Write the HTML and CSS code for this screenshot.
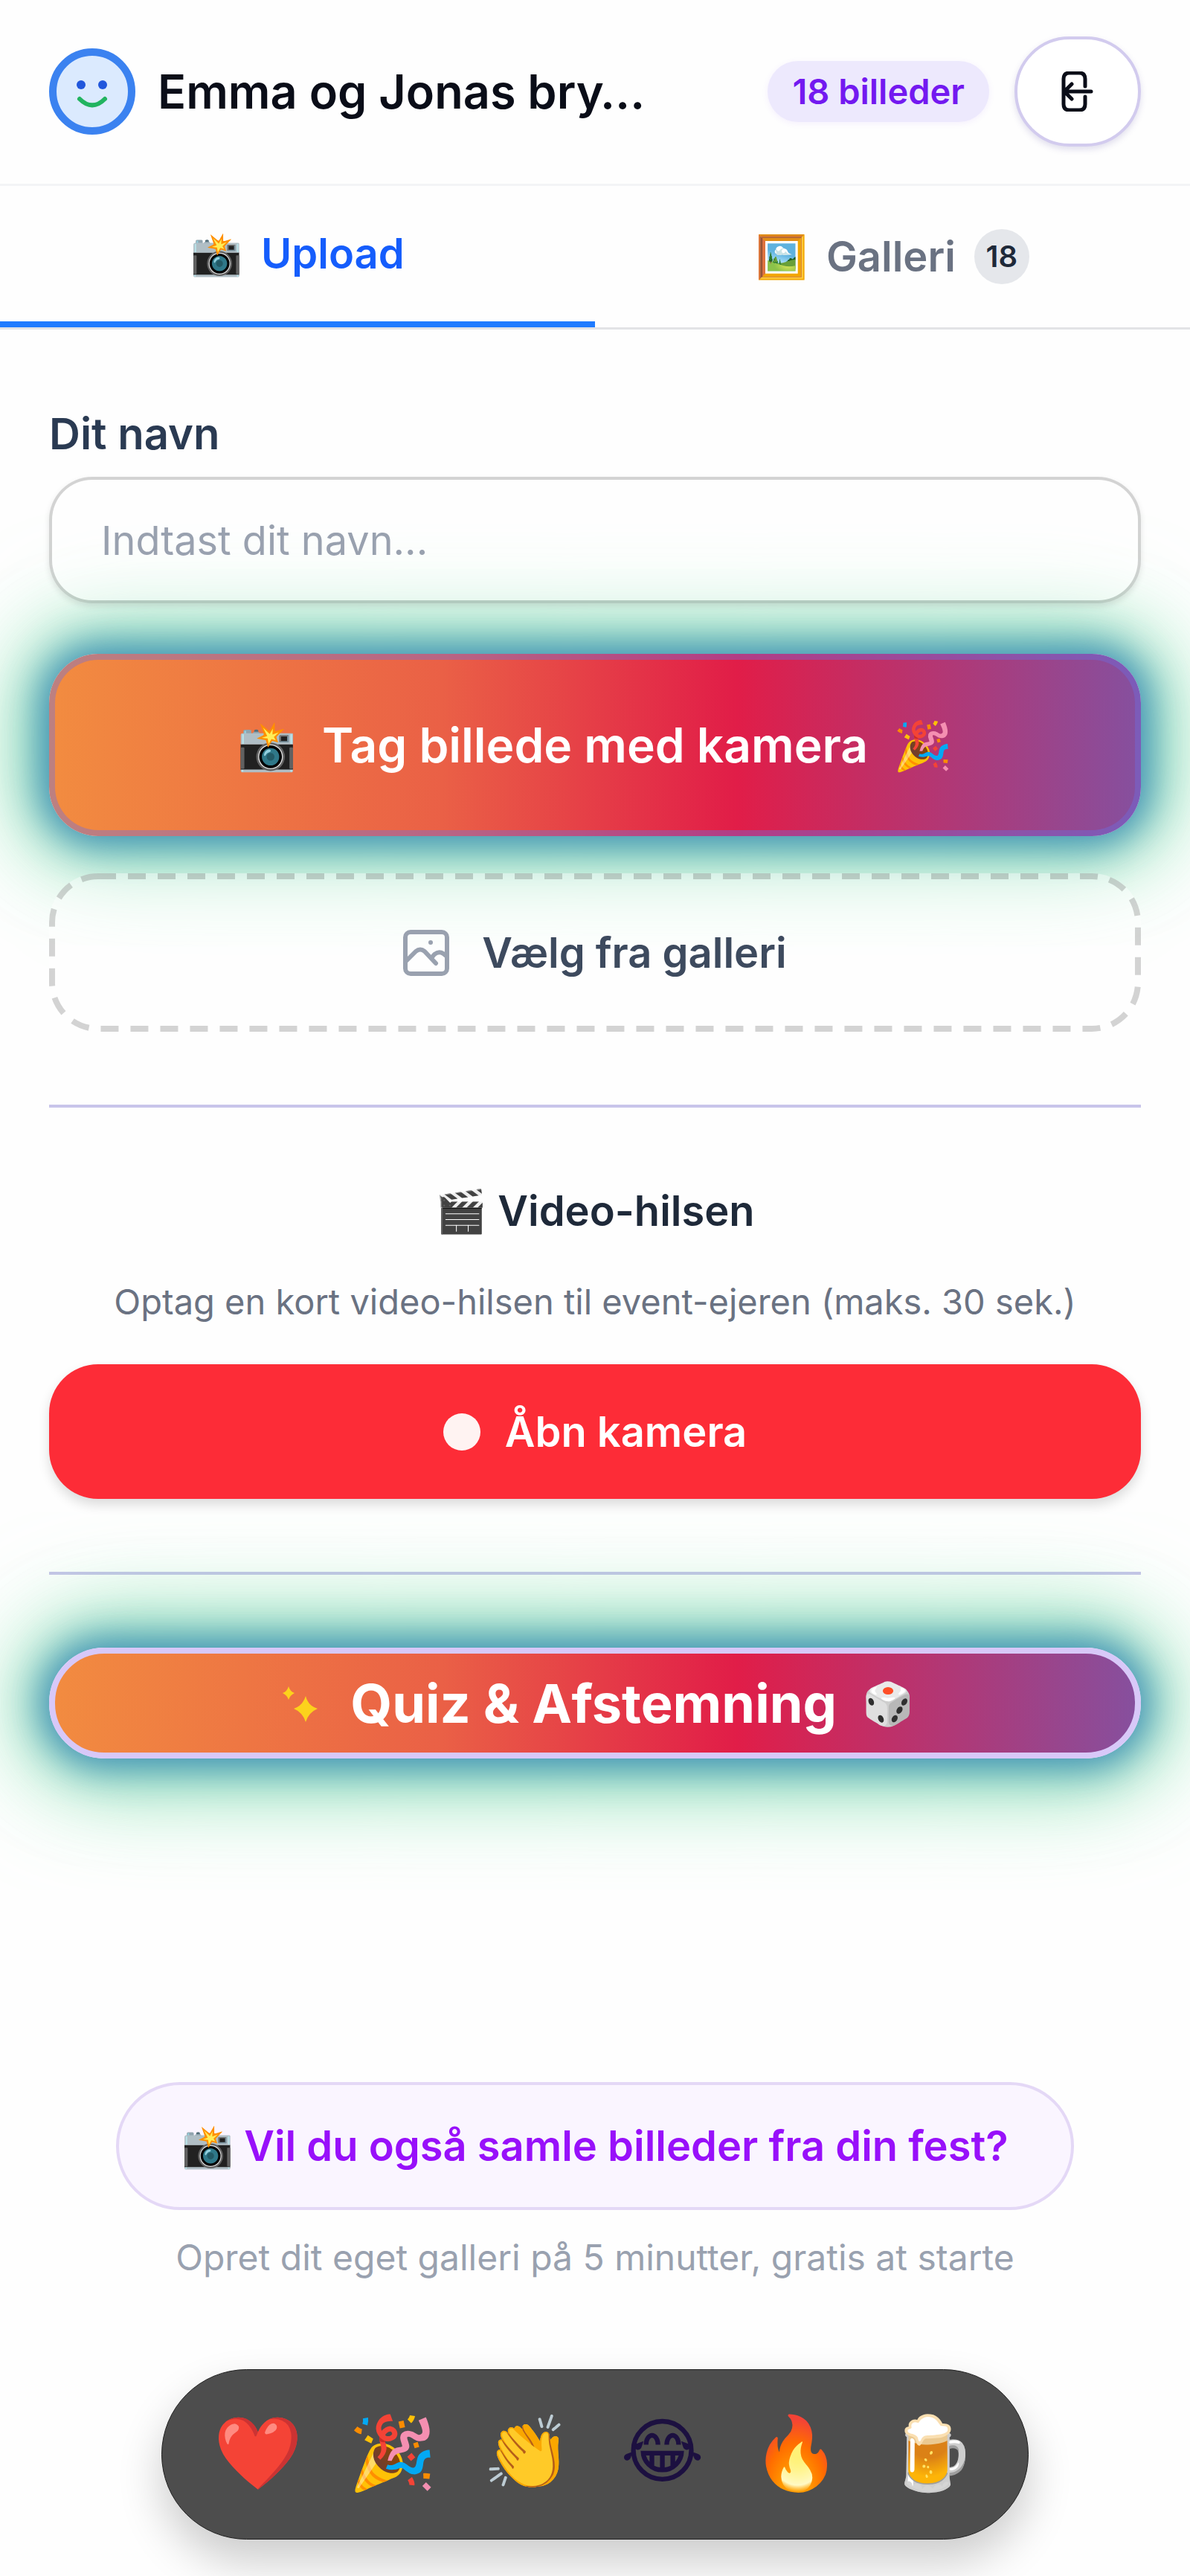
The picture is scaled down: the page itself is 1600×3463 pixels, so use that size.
FILE: index.html
```html
<!DOCTYPE html>
<html lang="da">
<head>
<meta charset="utf-8">
<meta name="viewport" content="width=device-width, initial-scale=1">
<title>Emma og Jonas bry…</title>
<link rel="stylesheet" href="styles.css">
</head>
<body>
<header class="header">
  <svg class="logo" viewBox="0 0 116 116" aria-hidden="true">
    <circle cx="58" cy="58" r="53" fill="#dbeafe" stroke="#3b82f0" stroke-width="10"/>
    <circle cx="43" cy="49" r="6" fill="#2157dc"/>
    <circle cx="72" cy="49" r="6" fill="#2157dc"/>
    <path d="M41 68q17 17 34 0" fill="none" stroke="#22b460" stroke-width="6" stroke-linecap="round"/>
  </svg>
  <h1 class="title">Emma og Jonas bry…</h1>
  <span class="count">18 billeder</span>
  <button class="leave" type="button" aria-label="Forlad">
    <svg class="leave-icon" viewBox="0 0 44 54" aria-hidden="true">
      <path d="M32 20V10q0-8-8-8H11q-8 0-8 8v34q0 8 8 8h13q8 0 8-8V34M40 27H5M14 17L4 27l10 10"/>
    </svg>
  </button>
</header>

<nav class="tabs">
  <button class="tab tab-active" type="button"><span>📸</span><span>Upload</span></button>
  <button class="tab" type="button"><span>🖼️</span><span>Galleri</span><span class="tab-count">18</span></button>
</nav>

<main class="main">
  <label class="label" for="name">Dit navn</label>
  <input class="name" id="name" type="text" placeholder="Indtast dit navn...">

  <button class="glow camera" type="button"><span class="emoji">📸</span><span>Tag billede med kamera</span><span class="emoji">🎉</span></button>

  <button class="gallery" type="button">
    <svg class="dashes" aria-hidden="true"><rect class="dash-rect" x="4" y="4" rx="62"/></svg>
    <svg class="gallery-icon" viewBox="0 0 62 62" aria-hidden="true">
      <rect x="3" y="3" width="56" height="56" rx="7"/>
      <path d="M3 43l14-14q6-5 12 0l15 16M38 38l4-5q6-5 12-1l5 4"/>
      <circle class="gallery-sun" cx="37" cy="17" r="3"/>
    </svg>
    <span>Vælg fra galleri</span>
  </button>

  <section class="section">
    <h2 class="section-title">🎬 Video-hilsen</h2>
    <p class="hint">Optag en kort video-hilsen til event-ejeren (maks. 30 sek.)</p>
    <button class="record" type="button"><span class="dot"></span><span>Åbn kamera</span></button>
  </section>

  <section class="section">
    <button class="glow quiz" type="button">
      <svg class="sparkle" viewBox="0 0 66 66" aria-hidden="true">
        <path d="M17 10q2 7 8 9q-6 3-8 9q-2-6-8-9q6-2 8-9zM40 23q3 13 16 17q-12 5-16 18q-4-13-16-18q12-4 16-17z"/>
      </svg>
      <span>Quiz &amp; Afstemning</span>
      <span class="emoji">🎲</span>
    </button>
  </section>
</main>

<footer class="footer">
  <a class="cta" href="#">📸 Vil du også samle billeder fra din fest?</a>
  <p class="cta-note">Opret dit eget galleri på 5 minutter, gratis at starte</p>
  <div class="reactions">
    <button class="reaction" type="button">❤️</button>
    <button class="reaction" type="button">🎉</button>
    <button class="reaction" type="button">👏</button>
    <button class="reaction reaction-outline" type="button">😂</button>
    <button class="reaction" type="button">🔥</button>
    <button class="reaction" type="button">🍺</button>
  </div>
</footer>
</body>
</html>
```
FILE: styles.css
```css
* { box-sizing: border-box; }

body {
  margin: 0;
  background: #fefefe;
  color: #0a0d18;
  font-family: Inter, "Noto Color Emoji", sans-serif;
  font-size: 56px;
  line-height: 82px;
  overflow-x: hidden;
}

h1, h2, p { margin: 0; }

button, input {
  font: inherit;
  color: inherit;
  margin: 0;
  padding: 0;
  border: 0;
  background: none;
}

.header {
  display: flex;
  align-items: center;
  padding: 49px 66px 50px;
  border-bottom: 3px solid #f3f4f6;
}

.logo { width: 116px; height: 116px; flex: none; }

.title {
  flex: 1;
  margin-left: 30px;
  font-size: 63px;
  font-weight: 600;
  white-space: nowrap;
}

.count {
  padding: 8px 33px;
  border-radius: 42px;
  background: #ede9fd;
  box-shadow: 0 2px 8px rgba(124, 58, 237, 0.08);
  color: #7319f0;
  font-size: 47px;
  font-weight: 600;
  line-height: 66px;
  white-space: nowrap;
}

.leave {
  display: flex;
  align-items: center;
  justify-content: center;
  width: 170px;
  height: 148px;
  margin-left: 34px;
  border: 4px solid #d2cbee;
  border-radius: 74px;
  background: #fff;
  box-shadow: 0 4px 8px rgba(90, 80, 160, 0.18);
}

.leave-icon {
  width: 44px;
  height: 54px;
  fill: none;
  stroke: #0a0d18;
  stroke-width: 5;
  stroke-linecap: round;
  stroke-linejoin: round;
}

.tabs {
  display: grid;
  grid-template-columns: 1fr 1fr;
  border-bottom: 3px solid #e2e3e6;
}

.tab {
  display: flex;
  align-items: center;
  justify-content: center;
  gap: 25px;
  height: 190px;
  color: #6a7282;
  font-weight: 600;
}

.tab-active {
  border-bottom: 8px solid #1f7bff;
  color: #155dfc;
}

.tab-count {
  width: 74px;
  border-radius: 37px;
  background: #e5e7eb;
  color: #1e2939;
  font-size: 40px;
  line-height: 74px;
}

.main {
  display: flex;
  flex-direction: column;
  padding: 99px 66px 0;
}

.label {
  margin-bottom: 17px;
  color: #2a3a52;
  font-size: 58px;
  font-weight: 600;
}

.name {
  position: relative;
  z-index: 1;
  height: 170px;
  padding: 0 66px;
  border: 4px solid #0000002b;
  border-radius: 58px;
  background: #ffffff66;
  background-clip: padding-box;
  box-shadow: 0 4px 8px rgba(0, 0, 0, 0.1);
  font-size: 54px;
}

.name::placeholder { color: #99a1af; opacity: 1; }

.glow {
  display: flex;
  align-items: center;
  justify-content: center;
  gap: 34px;
  border: 8px solid #6e6ee066;
  border-radius: 66px;
  background: linear-gradient(90deg, #f28c40 0%, #ea6046 36%, #e11d48 63%, #85509f 100%) border-box;
  box-shadow:
    0 0 50px 12px rgba(47, 127, 181, 0.85),
    0 0 100px 30px rgba(72, 195, 145, 0.6),
    0 0 150px 40px rgba(134, 239, 172, 0.4);
  color: #fff;
  font-weight: 600;
}

.camera {
  height: 245px;
  margin: 68px 0 50px;
  font-size: 64px;
}

.gallery {
  position: relative;
  z-index: 1;
  display: flex;
  align-items: center;
  justify-content: center;
  gap: 44px;
  height: 213px;
  margin-bottom: 98px;
  border-radius: 66px;
  background: #ffffff66;
  color: #3d4a5e;
  font-weight: 600;
}

.dashes {
  position: absolute;
  inset: 0;
  width: 100%;
  height: 100%;
}

.dash-rect {
  width: calc(100% - 8px);
  height: calc(100% - 8px);
  fill: none;
  stroke: #0000002b;
  stroke-width: 8;
  stroke-dasharray: 24 16;
}

.gallery-icon {
  width: 62px;
  height: 62px;
  fill: none;
  stroke: #99a1af;
  stroke-width: 6;
  stroke-linecap: round;
  stroke-linejoin: round;
}

.gallery-sun {
  fill: #99a1af;
  stroke: none;
}

.section {
  display: flex;
  flex-direction: column;
  padding: 98px 0;
  border-top: 4px solid #c8c4ea;
  text-align: center;
}

.section:last-child { padding-bottom: 0; }

.section-title {
  font-size: 56px;
  font-weight: 600;
  color: #1e2939;
}

.hint {
  margin: 48px 0 51px;
  color: #6a7282;
  font-size: 47px;
  line-height: 66px;
}

.record {
  display: flex;
  align-items: center;
  justify-content: center;
  gap: 33px;
  height: 181px;
  border-radius: 66px;
  background: #fd2c37;
  box-shadow: 0 8px 16px rgba(0, 0, 0, 0.14);
  color: #fff;
  font-weight: 600;
}

.dot {
  width: 50px;
  height: 50px;
  border-radius: 50%;
  background: #fff3f2;
}

.quiz {
  height: 149px;
  border-color: #d8c8f8;
  border-radius: 74px;
  font-size: 72px;
  font-weight: 700;
}

.quiz .emoji { font-size: 56px; }

.sparkle {
  width: 66px;
  height: 66px;
  fill: #fcd21c;
}

.footer {
  display: flex;
  flex-direction: column;
  align-items: center;
  padding: 435px 66px 50px;
  text-align: center;
}

.cta {
  padding: 41px 84px;
  border: 4px solid #e4d8f6;
  border-radius: 86px;
  background: #faf5ff;
  color: #9810fa;
  font-weight: 600;
  text-decoration: none;
}

.cta-note {
  margin: 31px 0 117px;
  color: #99a1af;
  font-size: 48px;
  line-height: 66px;
}

.reactions {
  display: flex;
  align-items: center;
  justify-content: center;
  height: 229px;
  padding: 0 39px 8px;
  border: 1px solid #1f1f1f;
  border-radius: 115px;
  background: #4d4d4d;
  box-shadow: 0 30px 60px rgba(0, 0, 0, 0.2);
}

.reaction {
  width: 181px;
  font-size: 96px;
  line-height: 132px;
}

.reaction-outline {
  color: #1c1040;
  font-family: "DejaVu Sans", sans-serif;
}
```
